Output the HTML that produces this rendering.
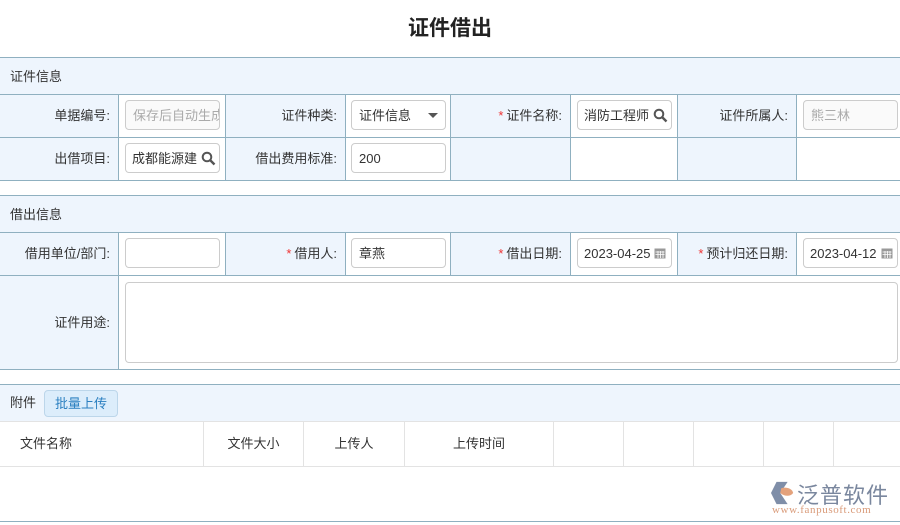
<!DOCTYPE html>
<html><head><meta charset="utf-8"><style>
*{box-sizing:border-box;margin:0;padding:0}
body{width:900px;height:525px;background:#fff;font-family:"Liberation Sans","Noto Sans CJK SC",sans-serif;font-size:13px;color:#333;position:relative;overflow:hidden}
.a{position:absolute}
.title{left:0;top:12px;width:900px;text-align:center;font-size:21px;font-weight:bold;color:#222}
.hdr{left:0;width:900px;background:#eef5fd;border-top:1px solid #8fb0c0;padding-left:10px;}
.lab{background:#eef5fd;text-align:right;padding-right:8px;border-right:1px solid #8fb0c0;border-bottom:1px solid #8fb0c0}
.cel{border-right:1px solid #8fb0c0;border-bottom:1px solid #8fb0c0;background:#fff}
.inp{position:absolute;border:1px solid #ccc;border-radius:4px;background:#fff;height:30px;line-height:29px;padding-left:7px;white-space:nowrap;overflow:hidden}
.st{color:#e33;margin-right:3px}
.th{border-right:1px solid #e3e3e3;border-bottom:1px solid #e3e3e3;line-height:44px;text-align:center}
</style></head><body>
<div class="a title">证件借出</div>
<div class="a hdr" style="top:57px;height:38px;line-height:37px;border-bottom:1px solid #8fb0c0">证件信息</div>
<!-- row1 -->
<div class="a lab" style="left:0;top:95px;width:119px;height:43px;line-height:42px">单据编号:</div>
<div class="a cel" style="left:119px;top:95px;width:107px;height:43px"></div>
<div class="inp" style="left:125px;top:100px;width:95px;color:#aaa;background:#fafafa">保存后自动生成</div>
<div class="a lab" style="left:226px;top:95px;width:120px;height:43px;line-height:42px">证件种类:</div>
<div class="a cel" style="left:346px;top:95px;width:105px;height:43px"></div>
<div class="inp" style="left:351px;top:100px;width:95px">证件信息<span style="position:absolute;right:7px;top:12px;border:5px solid transparent;border-top:5px solid #555"></span></div>
<div class="a lab" style="left:451px;top:95px;width:120px;height:43px;line-height:42px"><span class="st">*</span>证件名称:</div>
<div class="a cel" style="left:571px;top:95px;width:107px;height:43px"></div>
<div class="inp" style="left:577px;top:100px;width:95px;padding-left:6px">消防工程师</div>
<svg class="a" style="left:653px;top:108px" width="15" height="15" viewBox="0 0 15 15"><circle cx="6" cy="6" r="4.3" fill="none" stroke="#555" stroke-width="2"/><path d="M9 9l4.5 4.5" stroke="#555" stroke-width="2.4"/></svg>
<div class="a lab" style="left:678px;top:95px;width:119px;height:43px;line-height:42px">证件所属人:</div>
<div class="a cel" style="left:797px;top:95px;width:103px;height:43px;border-right:none"></div>
<div class="inp" style="left:803px;top:100px;width:95px;color:#aaa;background:#fafafa">熊三林</div>
<!-- row2 -->
<div class="a lab" style="left:0;top:138px;width:119px;height:43px;line-height:42px">出借项目:</div>
<div class="a cel" style="left:119px;top:138px;width:107px;height:43px"></div>
<div class="inp" style="left:125px;top:143px;width:95px;padding-left:6px">成都能源建</div>
<svg class="a" style="left:201px;top:151px" width="15" height="15" viewBox="0 0 15 15"><circle cx="6" cy="6" r="4.3" fill="none" stroke="#555" stroke-width="2"/><path d="M9 9l4.5 4.5" stroke="#555" stroke-width="2.4"/></svg>
<div class="a lab" style="left:226px;top:138px;width:120px;height:43px;line-height:42px">借出费用标准:</div>
<div class="a cel" style="left:346px;top:138px;width:105px;height:43px"></div>
<div class="inp" style="left:351px;top:143px;width:95px">200</div>
<div class="a lab" style="left:451px;top:138px;width:120px;height:43px"></div>
<div class="a cel" style="left:571px;top:138px;width:107px;height:43px"></div>
<div class="a lab" style="left:678px;top:138px;width:119px;height:43px"></div>
<div class="a cel" style="left:797px;top:138px;width:103px;height:43px;border-right:none"></div>
<!-- section 2 -->
<div class="a hdr" style="top:195px;height:38px;line-height:37px;border-bottom:1px solid #8fb0c0">借出信息</div>
<div class="a lab" style="left:0;top:233px;width:119px;height:43px;line-height:42px">借用单位/部门:</div>
<div class="a cel" style="left:119px;top:233px;width:107px;height:43px"></div>
<div class="inp" style="left:125px;top:238px;width:95px"></div>
<div class="a lab" style="left:226px;top:233px;width:120px;height:43px;line-height:42px"><span class="st">*</span>借用人:</div>
<div class="a cel" style="left:346px;top:233px;width:105px;height:43px"></div>
<div class="inp" style="left:351px;top:238px;width:95px">章燕</div>
<div class="a lab" style="left:451px;top:233px;width:120px;height:43px;line-height:42px"><span class="st">*</span>借出日期:</div>
<div class="a cel" style="left:571px;top:233px;width:107px;height:43px"></div>
<div class="inp" style="left:577px;top:238px;width:95px;padding-left:6px">2023-04-25</div>
<div class="a lab" style="left:678px;top:233px;width:119px;height:43px;line-height:42px"><span class="st">*</span>预计归还日期:</div>
<div class="a cel" style="left:797px;top:233px;width:103px;height:43px;border-right:none"></div>
<div class="inp" style="left:803px;top:238px;width:95px;padding-left:6px">2023-04-12</div>
<svg class="a" style="left:654px;top:247px" width="12" height="12" viewBox="0 0 12 12"><rect x="0.5" y="1.5" width="11" height="10" fill="#999"/><path d="M1.5 5h9M1.5 7.5h9M4 4v7M6.5 4v7M9 4v7" stroke="#fff" stroke-width=".8"/></svg>
<svg class="a" style="left:881px;top:247px" width="12" height="12" viewBox="0 0 12 12"><rect x="0.5" y="1.5" width="11" height="10" fill="#999"/><path d="M1.5 5h9M1.5 7.5h9M4 4v7M6.5 4v7M9 4v7" stroke="#fff" stroke-width=".8"/></svg>
<div class="a lab" style="left:0;top:276px;width:119px;height:94px;line-height:94px">证件用途:</div>
<div class="a cel" style="left:119px;top:276px;width:781px;height:94px;border-right:none"></div>
<div class="inp" style="left:125px;top:282px;width:773px;height:81px"></div>
<!-- attachments -->
<div class="a hdr" style="top:384px;height:38px;line-height:36px;border-bottom:1px solid #e3e3e3">附件</div>
<div class="a" style="left:44px;top:390px;width:74px;height:27px;border:1px solid #bcd6ea;border-radius:4px;background:#dcedfb;color:#2a7fc0;line-height:25px;text-align:center">批量上传</div>
<div class="a th" style="left:0;top:422px;width:204px;height:45px;text-align:left;padding-left:20px">文件名称</div>
<div class="a th" style="left:204px;top:422px;width:100px;height:45px">文件大小</div>
<div class="a th" style="left:304px;top:422px;width:101px;height:45px">上传人</div>
<div class="a th" style="left:405px;top:422px;width:149px;height:45px">上传时间</div>
<div class="a th" style="left:554px;top:422px;width:70px;height:45px"></div>
<div class="a th" style="left:624px;top:422px;width:70px;height:45px"></div>
<div class="a th" style="left:694px;top:422px;width:70px;height:45px"></div>
<div class="a th" style="left:764px;top:422px;width:70px;height:45px"></div>
<div class="a th" style="left:834px;top:422px;width:66px;height:45px;border-right:none"></div>
<div class="a" style="left:0;top:521px;width:900px;height:1px;background:#8fb0c0"></div>
<!-- logo -->
<svg class="a" style="left:770px;top:481px" width="26" height="24" viewBox="0 0 28 26"><path d="M7 1h12l-8 12 8 12H7L1 13z" fill="#7f8ea8"/><path d="M12 8c5-2 12 0 13 5-3 4-9 4-14 0z" fill="#e4a27c"/></svg>
<div class="a" style="left:797px;top:478px;font-size:22px;color:#7a879e;letter-spacing:1px">泛普软件</div>
<div class="a" style="left:772px;top:504px;font-size:11px;color:#d99a78;font-family:'Liberation Serif',serif;letter-spacing:.6px">www.fanpusoft.com</div>
</body></html>
